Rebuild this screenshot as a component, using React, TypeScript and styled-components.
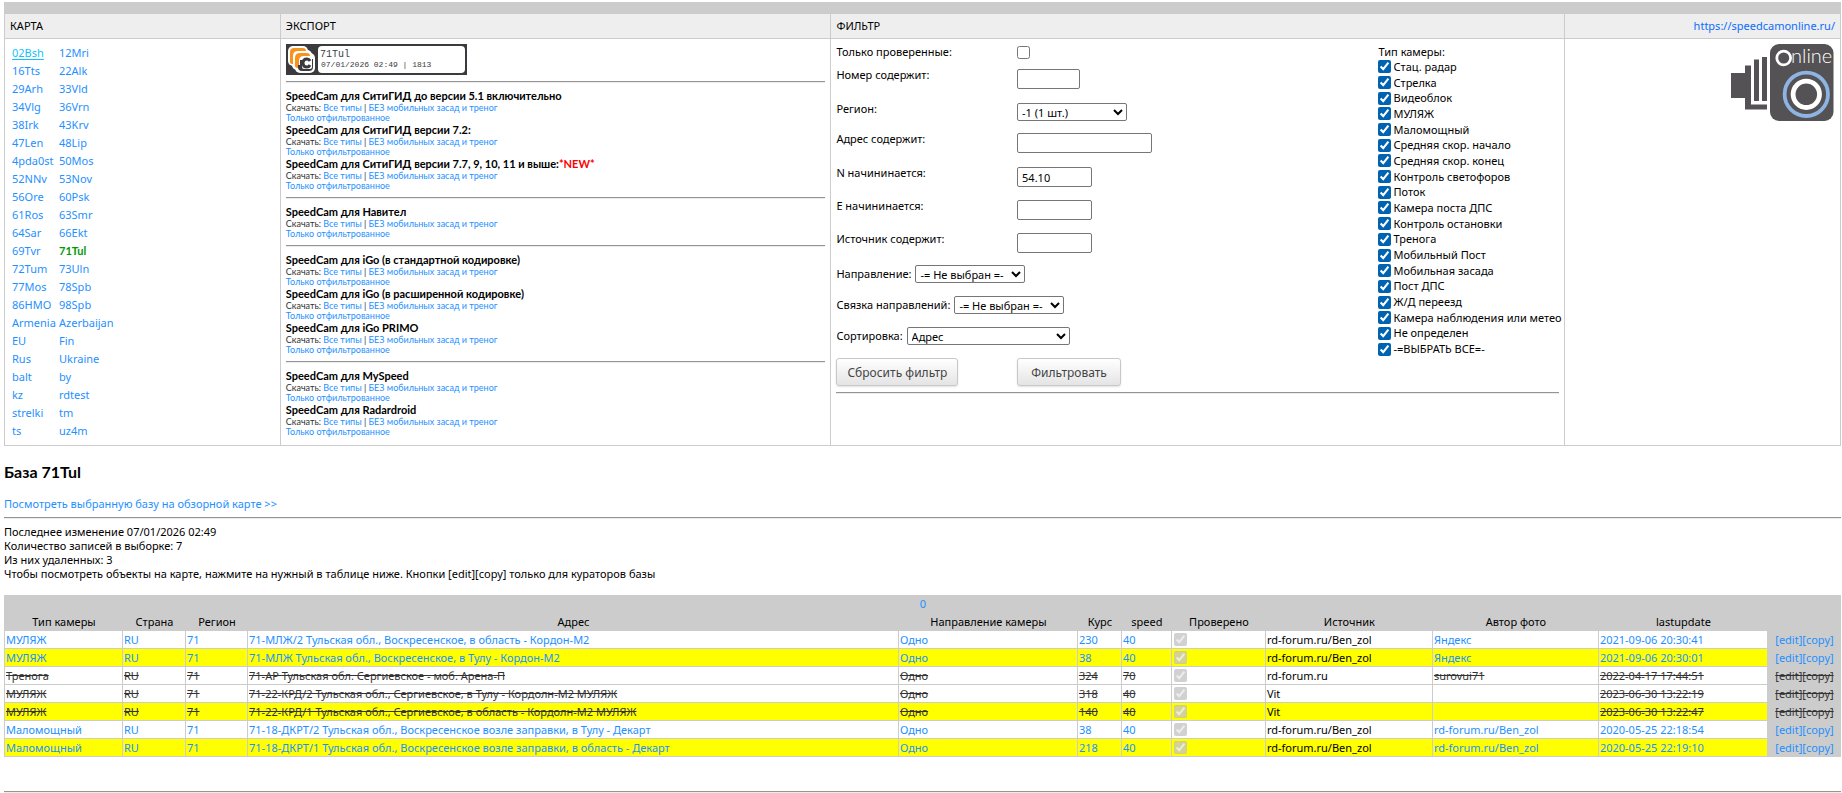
import React from "react";
import styled, { createGlobalStyle, css } from "styled-components";

const line = "#cccccc";
const link = "#1e90ff";

const GlobalStyle = createGlobalStyle`
  * { box-sizing: border-box; }
  body {
    margin: 0;
    background: #fff;
    color: #000;
    font-family: "Noto Sans", sans-serif;
    font-size: 11px;
    line-height: 14px;
  }
  a { color: ${link}; text-decoration: none; }
  a:hover { color: #00bfff; text-decoration: underline; }
  input, select, button { font-family: inherit; font-size: 11px; margin: 0; }
`;

const Page = styled.div`
  padding: 2px 1px 0 4px;
`;

const Rule = styled.hr<{ $gap?: number }>`
  margin: ${(p) => p.$gap ?? 6}px 0;
  border: 0;
  height: 2px;
  border-top: 1px solid #949494;
  border-bottom: 1px solid #ececec;
`;

/* ---------- top panels ---------- */

const TopBar = styled.div`
  height: 12px;
  background: ${line};
`;

const Panels = styled.div`
  display: grid;
  grid-template-columns: 15fr 30fr 40fr 15fr;
  grid-template-rows: 24px auto;
  gap: 1px;
  padding: 0 1px 1px;
  background: ${line};
`;

const PanelTitle = styled.div<{ $right?: boolean }>`
  display: flex;
  align-items: center;
  justify-content: ${(p) => (p.$right ? "flex-end" : "flex-start")};
  padding: 0 5px;
  background: #eeeeee;
`;

const SiteLink = styled.a`
  && { color: #0a6cff; }
`;

const Panel = styled.div`
  min-width: 0;
  padding: 5px;
  background: #fff;
`;

const RegionList = styled.nav`
  display: grid;
  grid-template-columns: 47px max-content;
  grid-auto-rows: 18px;
  align-items: center;
  padding-left: 2px;
`;

const RegionLink = styled.a<{ $state?: "hover" | "current" }>`
  ${(p) => p.$state === "hover" && css`&& { color: #12bfff; text-decoration: underline; text-underline-offset: 2px; }`}
  ${(p) => p.$state === "current" && css`&& { color: #009900; font-family: Lato, sans-serif; font-weight: 700; }`}
`;

const Banner = styled.svg`
  display: block;
`;

const ExportTitle = styled.h3`
  margin: 0;
  font-family: Lato, sans-serif;
  font-size: 11px;
  line-height: 14px;
  font-weight: 700;
`;

const NewMark = styled.span`
  color: #ff0000;
`;

const ExportLinks = styled.div`
  font-family: Lato, sans-serif;
  font-size: 9px;
  line-height: 10px;
  color: #333;
`;

const FilterBody = styled.form`
  display: grid;
  grid-template-columns: 3fr 1fr;
`;

const Field = styled.div<{ $height: number }>`
  display: grid;
  grid-template-columns: 1fr 2fr;
  align-items: start;
  height: ${(p) => p.$height}px;
`;

const InlineField = styled.div`
  display: flex;
  align-items: center;
  gap: 4px;
  height: 18px;
  margin-bottom: 13px;
`;

const Label = styled.label`
  line-height: 16px;
`;

const Check = styled.input.attrs({ type: "checkbox" })`
  width: 13px;
  height: 13px;
  accent-color: #0063b1;
`;

const SoloCheck = styled(Check)`
  margin-top: 2px;
`;

const TextBox = styled.input.attrs({ type: "text" })<{ $width: number }>`
  width: ${(p) => p.$width}px;
  height: 20px;
  margin-top: 2px;
  padding: 0 4px;
  border: 1px solid #767676;
  border-radius: 2px;
  background: #fff;
`;

const Select = styled.select<{ $width: number; $spaced?: boolean }>`
  width: ${(p) => p.$width}px;
  height: 18px;
  margin-top: ${(p) => (p.$spaced ? 2 : 0)}px;
  padding: 0;
  border: 1px solid #767676;
  border-radius: 2px;
  background: #fff;
  color: #000;
`;

const ButtonRow = styled.div`
  display: grid;
  grid-template-columns: 1fr 2fr;
  justify-items: start;
`;

const Button = styled.button<{ $width: number }>`
  width: ${(p) => p.$width}px;
  height: 28px;
  padding: 0;
  border: 1px solid #c8c8c8;
  border-radius: 3px;
  background: linear-gradient(#ffffff, #e4e4e4);
  box-shadow: 0 1px 2px rgba(0, 0, 0, 0.12);
  color: #444;
  font-size: 12px;
`;

const Types = styled.fieldset`
  margin: 0;
  padding: 0;
  border: 0;
  min-width: 0;
`;

const TypesTitle = styled.legend`
  padding: 0;
  line-height: 15px;
`;

const TypeList = styled.div`
  display: grid;
  grid-auto-rows: 1fr;
  height: 298px;
`;

const TypeItem = styled.label`
  display: flex;
  align-items: center;
  gap: 2px;
  white-space: nowrap;
`;

const LogoBox = styled.div`
  display: flex;
  justify-content: flex-end;
`;

/* ---------- base section ---------- */

const BaseTitle = styled.h2`
  margin: 15px 0 14px;
  font-family: Lato, sans-serif;
  font-size: 16px;
  line-height: 22px;
  font-weight: 700;
`;

const Info = styled.p`
  margin: 0 0 14px;
`;

const DataTable = styled.table`
  width: 100%;
  table-layout: fixed;
  border-collapse: separate;
  border-spacing: 0;
  border-left: 1px solid ${line};
  background: ${line};
`;

const Head = styled.th`
  height: 18px;
  padding: 0;
  font-weight: 400;
  line-height: 14px;
  text-align: center;
`;

const Row = styled.tr<{ $yellow: boolean; $deleted: boolean }>`
  background: ${(p) => (p.$yellow ? "#ffff00" : "#ffffff")};
  ${(p) => p.$deleted && css`
    a { color: #333; text-decoration: line-through; }
  `}
`;

const Cell = styled.td`
  height: 18px;
  padding: 0 1px;
  border-right: 1px solid ${line};
  border-bottom: 1px solid ${line};
  line-height: 14px;
  white-space: nowrap;
  overflow: hidden;
`;

const ActionCell = styled(Cell)`
  border-right: 0;
  background: ${line};
  text-align: center;
`;

const CellCheck = styled(Check)`
  display: block;
  margin-left: 1px;
`;

const regions = [
  "02Bsh", "12Mri", "16Tts", "22Alk", "29Arh", "33Vld", "34Vlg", "36Vrn", "38Irk", "43Krv",
  "47Len", "48Lip", "4pda0st", "50Mos", "52NNv", "53Nov", "56Ore", "60Psk", "61Ros", "63Smr",
  "64Sar", "66Ekt", "69Tvr", "71Tul", "72Tum", "73Uln", "77Mos", "78Spb", "86HMO", "98Spb",
  "Armenia", "Azerbaijan", "EU", "Fin", "Rus", "Ukraine", "balt", "by", "kz", "rdtest",
  "strelki", "tm", "ts", "uz4m",
];

const exportsByGroup: { title: string; isNew?: boolean }[][] = [
  [
    { title: "SpeedCam для СитиГИД до версии 5.1 включительно" },
    { title: "SpeedCam для СитиГИД версии 7.2:" },
    { title: "SpeedCam для СитиГИД версии 7.7, 9, 10, 11 и выше:", isNew: true },
  ],
  [{ title: "SpeedCam для Навител" }],
  [
    { title: "SpeedCam для iGo (в стандартной кодировке)" },
    { title: "SpeedCam для iGo (в расширенной кодировке)" },
    { title: "SpeedCam для iGo PRIMO" },
  ],
  [{ title: "SpeedCam для MySpeed" }, { title: "SpeedCam для Radardroid" }],
];

const cameraTypes = [
  "Стац. радар", "Стрелка", "Видеоблок", "МУЛЯЖ", "Маломощный", "Средняя скор. начало",
  "Средняя скор. конец", "Контроль светофоров", "Поток", "Камера поста ДПС",
  "Контроль остановки", "Тренога", "Мобильный Пост", "Мобильная засада", "Пост ДПС",
  "Ж/Д переезд", "Камера наблюдения или метео", "Не определен", "-=ВЫБРАТЬ ВСЕ=-",
];

const columns: [string, number | undefined][] = [
  ["Тип камеры", 118], ["Страна", 63], ["Регион", 62], ["Адрес", undefined],
  ["Направление камеры", 179], ["Курс", 44], ["speed", 50], ["Проверено", 94],
  ["Источник", 167], ["Автор фото", 166], ["lastupdate", 169], ["", 73],
];

interface Camera {
  type: string;
  address: string;
  course: string;
  speed: string;
  source: string;
  author: string;
  updated: string;
  yellow?: boolean;
  deleted?: boolean;
}

const cameras: Camera[] = [
  { type: "МУЛЯЖ", address: "71-МЛЖ/2 Тульская обл., Воскресенское, в область - Кордон-М2", course: "230", speed: "40", source: "rd-forum.ru/Ben_zol", author: "Яндекс", updated: "2021-09-06 20:30:41" },
  { type: "МУЛЯЖ", address: "71-МЛЖ Тульская обл., Воскресенское, в Тулу - Кордон-М2", course: "38", speed: "40", source: "rd-forum.ru/Ben_zol", author: "Яндекс", updated: "2021-09-06 20:30:01", yellow: true },
  { type: "Тренога", address: "71-АР Тульская обл. Сергиевское - моб. Арена-П", course: "324", speed: "70", source: "rd-forum.ru", author: "surovui71", updated: "2022-04-17 17:44:51", deleted: true },
  { type: "МУЛЯЖ", address: "71-22-КРД/2 Тульская обл., Сергиевское, в Тулу - Кордолн-М2 МУЛЯЖ", course: "318", speed: "40", source: "Vit", author: "", updated: "2023-06-30 13:22:19", deleted: true },
  { type: "МУЛЯЖ", address: "71-22-КРД/1 Тульская обл., Сергиевское, в область - Кордолн-М2 МУЛЯЖ", course: "140", speed: "40", source: "Vit", author: "", updated: "2023-06-30 13:22:47", yellow: true, deleted: true },
  { type: "Маломощный", address: "71-18-ДКРТ/2 Тульская обл., Воскресенское возле заправки, в Тулу - Декарт", course: "38", speed: "40", source: "rd-forum.ru/Ben_zol", author: "rd-forum.ru/Ben_zol", updated: "2020-05-25 22:18:54" },
  { type: "Маломощный", address: "71-18-ДКРТ/1 Тульская обл., Воскресенское возле заправки, в область - Декарт", course: "218", speed: "40", source: "rd-forum.ru/Ben_zol", author: "rd-forum.ru/Ben_zol", updated: "2020-05-25 22:19:10", yellow: true },
];

function BaseBanner() {
  return (
    <Banner width="181" height="31" viewBox="0 0 181 31">
      <rect width="181" height="31" fill="#3b3b3f" />
      <rect x="32" y="2" width="147" height="27" rx="4" fill="#fff" />
      <rect x="2" y="2" width="20" height="20" rx="5" fill="#fff" />
      <rect x="6" y="6" width="20" height="20" rx="5" fill="#fff" />
      <rect x="9" y="9" width="20" height="20" rx="5" fill="#fff" />
      <path d="M4 18V8q0-4 4-4h9q3 0 3 3h-8q-5 0-5 5v8q-3 0-3-2z" fill="#f7941d" />
      <path d="M9 22v-8q0-5 5-5h7q3 0 3 3h-6q-5 0-5 5v7q-4 0-4-2z" fill="#f7941d" />
      <path d="M14 16h2v7q0 2 2 2h6q2 0 2-2v-8h1v8q0 4-4 4h-7q-4 0-4-4v-2h2z" fill="#3b3b3f" />
      <path d="M24 17q-1-2-3-2-4 0-4 4t4 4q2 0 3-2" fill="none" stroke="#3b3b3f" strokeWidth="3" />
      <g fontFamily="'Liberation Mono', monospace" fill="#3b3b3f">
        <text x="34" y="13" fontSize="10">71Tul</text>
        <text x="35" y="23" fontSize="8">07/01/2026 02:49 | 1813</text>
      </g>
    </Banner>
  );
}

function CameraLogo() {
  return (
    <svg width="104" height="78" viewBox="0 0 104 78" role="img" aria-label="Speedcam Online">
      <g fill="#545254">
        <path d="M0 29h14v-7.500h6V60.500h16V65.500H14V54H0z" />
        <rect x="23" y="15.500" width="5" height="41.500" />
        <rect x="31" y="13" width="5" height="44" />
        <rect x="39" y="0" width="63.500" height="77" rx="9" />
      </g>
      <circle cx="52.700" cy="14" r="6.900" fill="none" stroke="#fff" strokeWidth="2.800" />
      <text x="60" y="19" fontSize="20" fontFamily="Lato, sans-serif" fontWeight="300" fill="#fff">nline</text>
      <circle cx="75.300" cy="50.300" r="21.700" fill="none" stroke="#8db4e2" strokeWidth="3.800" />
      <circle cx="75.300" cy="50.300" r="13.200" fill="none" stroke="#fff" strokeWidth="4.800" />
    </svg>
  );
}

function ExportItem({ title, isNew }: { title: string; isNew?: boolean }) {
  return (
    <div>
      <ExportTitle>{title}{isNew && <NewMark>*NEW*</NewMark>}</ExportTitle>
      <ExportLinks>
        Скачать: <a href="#all">Все типы</a> | <a href="#static">БЕЗ мобильных засад и треног</a>
        <br />
        <a href="#filtered">Только отфильтрованное</a>
      </ExportLinks>
    </div>
  );
}

function TextField({ id, label, width, value = "", height = 34 }: { id: string; label: string; width: number; value?: string; height?: number }) {
  return (
    <Field $height={height}>
      <Label htmlFor={id}>{label}</Label>
      <TextBox id={id} $width={width} defaultValue={value} />
    </Field>
  );
}

function InlineSelect({ id, label, width, option }: { id: string; label: string; width: number; option: string }) {
  return (
    <InlineField>
      <Label htmlFor={id}>{label}</Label>
      <Select id={id} $width={width}><option>{option}</option></Select>
    </InlineField>
  );
}

function Filter() {
  return (
    <>
      <FilterBody onSubmit={(e) => e.preventDefault()}>
        <div>
          <Field $height={23}>
            <Label htmlFor="checked">Только проверенные:</Label>
            <SoloCheck id="checked" />
          </Field>
          <TextField id="number" label="Номер содержит:" width={63} />
          <Field $height={30}>
            <Label htmlFor="region">Регион:</Label>
            <Select id="region" $width={110} $spaced><option>-1 (1 шт.)</option></Select>
          </Field>
          <TextField id="address" label="Адрес содержит:" width={135} />
          <TextField id="north" label="N начининается:" width={75} value="54.10" height={33} />
          <TextField id="east" label="E начининается:" width={75} height={33} />
          <TextField id="source" label="Источник содержит:" width={75} />
          <InlineSelect id="direction" label="Направление:" width={110} option="-= Не выбран =-" />
          <InlineSelect id="pair" label="Связка направлений:" width={110} option="-= Не выбран =-" />
          <InlineSelect id="sort" label="Сортировка:" width={163} option="Адрес" />
          <ButtonRow>
            <Button type="reset" $width={122}>Сбросить фильтр</Button>
            <Button type="submit" $width={104}>Фильтровать</Button>
          </ButtonRow>
        </div>
        <Types>
          <TypesTitle>Тип камеры:</TypesTitle>
          <TypeList>
            {cameraTypes.map((name) => (
              <TypeItem key={name}><Check defaultChecked />{name}</TypeItem>
            ))}
          </TypeList>
        </Types>
      </FilterBody>
      <Rule />
    </>
  );
}

function CameraRow({ camera }: { camera: Camera }) {
  const { type, address, course, speed, source, author, updated, yellow, deleted } = camera;
  const linked = (text: string) => <Cell><a href="#map">{text}</a></Cell>;
  return (
    <Row $yellow={!!yellow} $deleted={!!deleted}>
      {linked(type)}
      {linked("RU")}
      {linked("71")}
      {linked(address)}
      {linked("Одно")}
      {linked(course)}
      {linked(speed)}
      <Cell><CellCheck defaultChecked disabled aria-label="Проверено" /></Cell>
      <Cell>{source}</Cell>
      {linked(author)}
      {linked(updated)}
      <ActionCell><a href="#edit">[edit]</a><a href="#copy">[copy]</a></ActionCell>
    </Row>
  );
}

export default function App() {
  return (
    <Page>
      <GlobalStyle />
      <TopBar />
      <Panels>
        <PanelTitle>КАРТА</PanelTitle>
        <PanelTitle>ЭКСПОРТ</PanelTitle>
        <PanelTitle>ФИЛЬТР</PanelTitle>
        <PanelTitle $right><SiteLink href="#site">https://speedcamonline.ru/</SiteLink></PanelTitle>
        <Panel>
          <RegionList>
            {regions.map((name) => (
              <RegionLink
                key={name}
                href={`#${name}`}
                $state={name === "02Bsh" ? "hover" : name === "71Tul" ? "current" : undefined}
              >
                {name}
              </RegionLink>
            ))}
          </RegionList>
        </Panel>
        <Panel>
          <BaseBanner />
          {exportsByGroup.map((group) => (
            <React.Fragment key={group[0].title}>
              <Rule />
              {group.map((item) => <ExportItem key={item.title} {...item} />)}
            </React.Fragment>
          ))}
        </Panel>
        <Panel><Filter /></Panel>
        <Panel><LogoBox><CameraLogo /></LogoBox></Panel>
      </Panels>

      <BaseTitle>База 71Tul</BaseTitle>
      <a href="#overview">Посмотреть выбранную базу на обзорной карте &gt;&gt;</a>
      <Rule />
      <Info>
        Последнее изменение 07/01/2026 02:49<br />
        Количество записей в выборке: 7<br />
        Из них удаленных: 3<br />
        Чтобы посмотреть объекты на карте, нажмите на нужный в таблице ниже. Кнопки [edit][copy] только для кураторов базы
      </Info>
      <DataTable>
        <colgroup>
          {columns.map(([name, width]) => <col key={name} width={width} />)}
        </colgroup>
        <thead>
          <tr><Head colSpan={12}><a href="#page0">0</a></Head></tr>
          <tr>{columns.map(([name]) => <Head key={name}>{name}</Head>)}</tr>
        </thead>
        <tbody>
          {cameras.map((camera) => <CameraRow key={camera.updated} camera={camera} />)}
        </tbody>
      </DataTable>
      <Rule $gap={34} />
    </Page>
  );
}
